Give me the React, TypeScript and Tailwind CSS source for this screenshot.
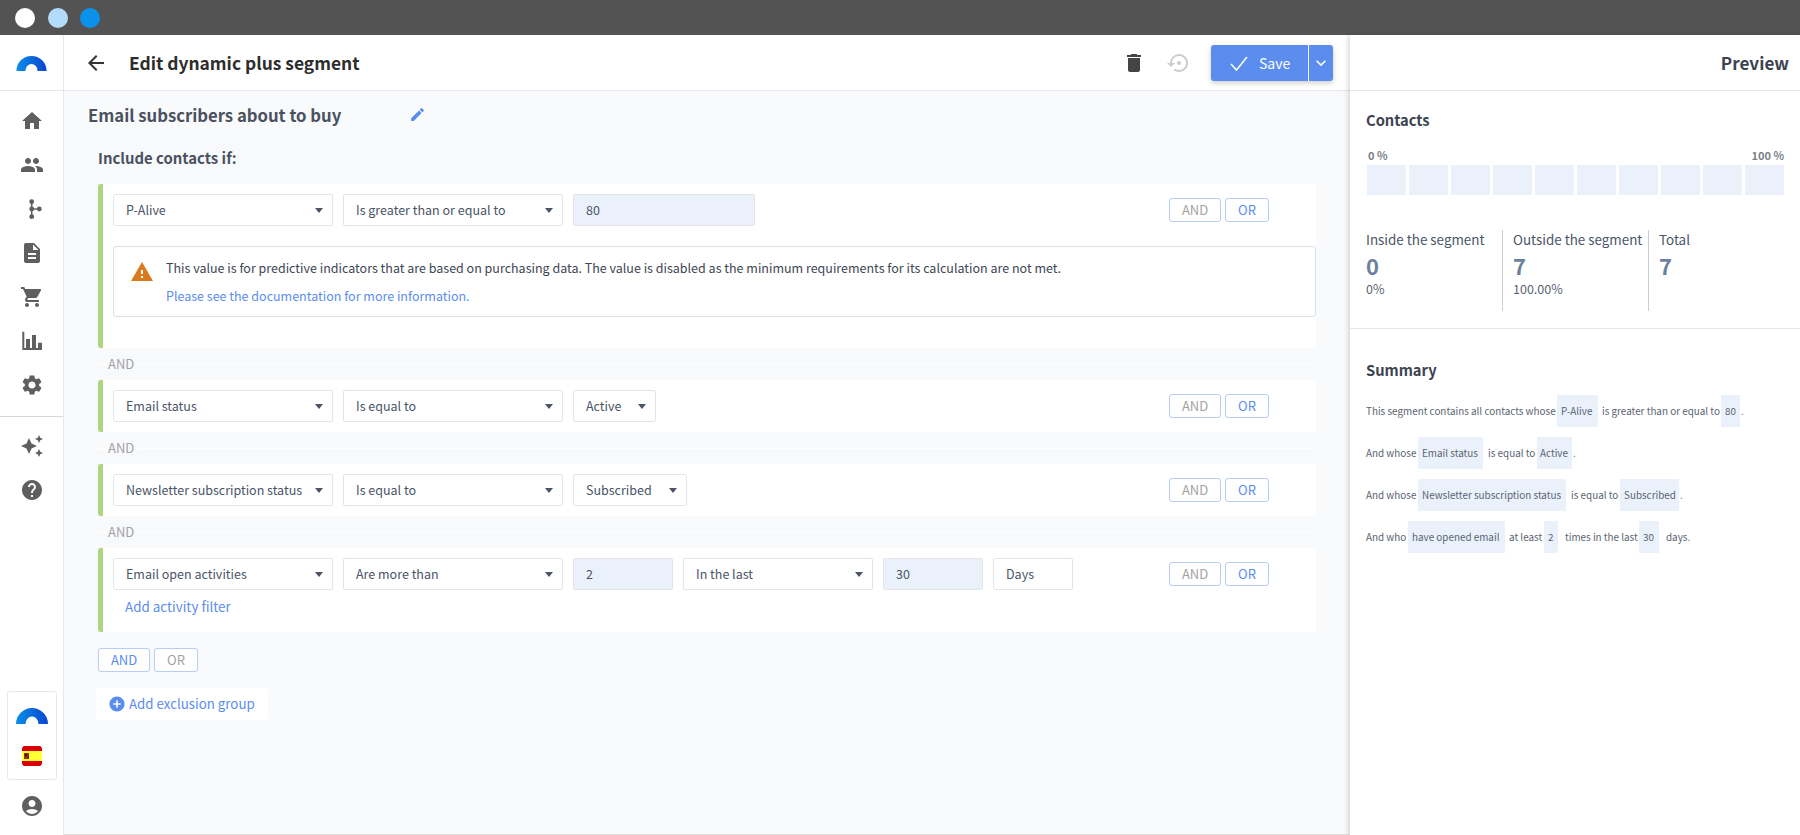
import { MdAccountCircle, MdAddCircle, MdArrowBack, MdAutoAwesome, MdDelete, MdDescription, MdEdit, MdHelp, MdHome, MdKeyboardArrowDown, MdPeople, MdSettings, MdSettingsBackupRestore, MdShoppingCart, MdWarning } from "react-icons/md"
import type { ReactNode } from "react"

function Logo({ id, className }: { id: string; className: string }) {
  return (
    <svg viewBox="0 0 32 17" className={className}>
      <defs>
        <linearGradient id={id} x1="0" y1="1" x2="1" y2="1">
          <stop offset="0" stopColor="#0a8fe8" />
          <stop offset="1" stopColor="#0a45d0" />
        </linearGradient>
      </defs>
      <path d="M0 17A16 16 0 0 1 32 17H22.500A6.500 7.500 0 0 0 9.500 17Z" fill={`url(#${id})`} />
    </svg>
  )
}

function BranchIcon() {
  return (
    <svg viewBox="0 0 24 24" className="w-6 h-6" fill="#5f5f5f">
      <circle cx="11.700" cy="4.700" r="2.400" />
      <circle cx="11.700" cy="12" r="2.400" />
      <circle cx="11.700" cy="19.700" r="2.400" />
      <circle cx="19.300" cy="12" r="2.400" />
      <path d="M10.900 4h1.600v16h-1.600z" />
      <path d="M12 11.300h7v1.400h-7z" />
    </svg>
  )
}

function BarsIcon() {
  return (
    <svg viewBox="0 0 24 24" className="w-6 h-6" fill="#5f5f5f">
      <path d="M2.300 2.700h2v16.300h17.700v2H2.300z" />
      <path d="M6 10h4v9H6zM12 6h4v13h-4zM18 13.700h4V19h-4z" />
    </svg>
  )
}

function SpainFlag() {
  return (
    <svg viewBox="0 0 20 20" className="w-5 h-5 rounded-[3px]">
      <rect width="20" height="20" fill="#d80000" />
      <rect y="5" width="20" height="10" fill="#ffff33" />
      <rect x="2" y="7" width="5" height="6" fill="#a52a00" />
      <rect x="3" y="8" width="2" height="2" fill="#222222" />
      <rect x="5" y="10" width="1.500" height="2" fill="#333333" />
    </svg>
  )
}

function NavItem({ children }: { children: ReactNode }) {
  return <div className="h-[44px] flex items-center justify-center text-[#5f5f5f]">{children}</div>
}

function Sidebar() {
  return (
    <aside className="w-[64px] shrink-0 bg-white border-r border-[#e5e7eb] flex flex-col">
      <div className="h-[56px] shrink-0 border-b border-[#e5e7eb] flex items-center justify-center">
        <Logo id="logoTop" className="w-[31px] h-[16px]" />
      </div>
      <div className="pt-[8px] flex flex-col">
        <NavItem><MdHome size={24} /></NavItem>
        <NavItem><MdPeople size={24} /></NavItem>
        <NavItem><BranchIcon /></NavItem>
        <NavItem><MdDescription size={24} /></NavItem>
        <NavItem><MdShoppingCart size={24} /></NavItem>
        <NavItem><BarsIcon /></NavItem>
        <NavItem><MdSettings size={24} /></NavItem>
      </div>
      <div className="mt-[9px] mb-[7px] border-t border-[#d9d9d9]" />
      <NavItem><MdAutoAwesome size={24} /></NavItem>
      <NavItem><MdHelp size={24} /></NavItem>
      <div className="mt-auto flex flex-col items-center">
        <div className="w-[50px] h-[89px] border border-[#e8e8e8] rounded-[3px] flex flex-col items-center pt-[15px]">
          <Logo id="logoBottom" className="w-[32px] h-[17px]" />
          <div className="mt-[22px]"><SpainFlag /></div>
        </div>
        <div className="mt-[14px] mb-[17px] text-[#5f5f5f]"><MdAccountCircle size={24} /></div>
      </div>
    </aside>
  )
}

function Caret() {
  return <span className="ml-auto w-0 h-0 border-x-[4.500px] border-x-transparent border-t-[5px] border-t-[#4b5563]" />
}

function Select({ w, children }: { w: string; children: ReactNode }) {
  return (
    <div className={`${w} h-[32px] shrink-0 bg-white border border-[#e3e5e8] rounded-[2px] pl-[12px] pr-[9px] flex items-center text-[12.500px] text-[#4a5568]`}>
      <span>{children}</span>
      <Caret />
    </div>
  )
}

function ValueBox({ w, children }: { w: string; children: ReactNode }) {
  return (
    <div className={`${w} h-[32px] shrink-0 bg-[#eaf1fb] border border-[#e3e5e8] rounded-[2px] px-[12px] flex items-center text-[12.500px] text-[#4a5568]`}>
      {children}
    </div>
  )
}

function AndOr({ active = "OR" }: { active?: "AND" | "OR" }) {
  return (
    <div className="flex gap-[4px] text-[13px]">
      <button className={`w-[52px] h-[24px] border border-[#b7cff5] rounded-[3px] bg-white ${active === "AND" ? "text-[#5b8def]" : "text-[#a3a3a3]"}`}>AND</button>
      <button className={`w-[44px] h-[24px] border border-[#b7cff5] rounded-[3px] bg-white ${active === "OR" ? "text-[#5b8def]" : "text-[#a3a3a3]"}`}>OR</button>
    </div>
  )
}

function Row({ children, below }: { children: ReactNode; below?: ReactNode }) {
  return (
    <div className="bg-white border-l-[5px] border-[#aed581] rounded-l-[3px] pl-[10px] py-[10px]">
      <div className="flex gap-[10px] pr-[47px]">
        {children}
        <div className="ml-auto pt-[4px]"><AndOr /></div>
      </div>
      {below}
    </div>
  )
}

function AndDivider() {
  return (
    <div className="h-[32px] flex items-center">
      <div className="w-[9px] h-px bg-white" />
      <span className="px-[1px] text-[13px] text-[#a3a3a3]">AND</span>
      <div className="flex-1 h-px bg-white ml-[3px]" />
    </div>
  )
}

function Editor() {
  return (
    <main className="flex-1 min-w-0 bg-[#f9fafb] border-b border-[#dddddd] flex flex-col">
      <header className="h-[56px] shrink-0 bg-white border-b border-[#e5e7eb] flex items-center pl-[20px] pr-[17px]">
        <MdArrowBack size={24} className="text-[#333333]" />
        <h1 className="ml-[21px] text-[17.400px] font-semibold text-[#2d2d2d]">Edit dynamic plus segment</h1>
        <MdDelete size={24} className="ml-auto text-[#444444]" />
        <MdSettingsBackupRestore size={24} className="ml-[21px] text-[#cccccc]" />
        <div className="ml-[20px] h-[36px] w-[122px] flex bg-[#5b8def] rounded-[3px] shadow-[0_2px_5px_rgba(0,0,0,0.2)] text-white">
          <div className="w-[98px] flex items-center border-r border-white pl-[18px]">
            <svg viewBox="0 0 20 20" className="w-[20px] h-[20px]" fill="none" stroke="#ffffff" strokeWidth="1.500">
              <path d="M2 11l5.500 6L18 4" />
            </svg>
            <span className="ml-[10px] text-[14px]">Save</span>
          </div>
          <div className="flex-1 flex items-center justify-center"><MdKeyboardArrowDown size={20} /></div>
        </div>
      </header>

      <div className="h-[47px] shrink-0 pl-[24px] flex items-center">
        <h2 className="w-[321px] text-[16.700px] font-bold text-[#4a5160]">Email subscribers about to buy</h2>
        <MdEdit size={17} className="text-[#5b8def]" />
      </div>

      <section className="ml-[25px] w-[1227px] h-[550px] bg-[#f8f9fb] pl-[9px] pt-[10px]">
        <h3 className="h-[20px] text-[14.900px] font-bold text-[#4a5160] leading-[20px]">Include contacts if:</h3>
        <div className="mt-[16px]">
          <Row
            below={
              <div className="mt-[20px] mb-[21px] h-[71px] bg-white border border-[#dcdfe3] rounded-[3px] flex pl-[16px] pt-[11px]">
                <MdWarning size={24} className="text-[#d97a1f] mt-[2px]" />
                <div className="ml-[12px] text-[12.500px]">
                  <p className="text-[#3d4654] leading-[20px]">This value is for predictive indicators that are based on purchasing data. The value is disabled as the minimum requirements for its calculation are not met.</p>
                  <p className="mt-[8px] text-[#5b8def] leading-[20px]">Please see the documentation for more information.</p>
                </div>
              </div>
            }
          >
            <Select w="w-[220px]">P-Alive</Select>
            <Select w="w-[220px]">Is greater than or equal to</Select>
            <ValueBox w="w-[182px]">80</ValueBox>
          </Row>
          <AndDivider />
          <Row>
            <Select w="w-[220px]">Email status</Select>
            <Select w="w-[220px]">Is equal to</Select>
            <Select w="w-[83px]">Active</Select>
          </Row>
          <AndDivider />
          <Row>
            <Select w="w-[220px]">Newsletter subscription status</Select>
            <Select w="w-[220px]">Is equal to</Select>
            <Select w="w-[114px]">Subscribed</Select>
          </Row>
          <AndDivider />
          <Row
            below={
              <p className="mt-[6px] mb-[6px] pl-[12px] text-[13.400px] text-[#5b8def] leading-[20px]">Add activity filter</p>
            }
          >
            <Select w="w-[220px]">Email open activities</Select>
            <Select w="w-[220px]">Are more than</Select>
            <ValueBox w="w-[100px]">2</ValueBox>
            <Select w="w-[190px]">In the last</Select>
            <ValueBox w="w-[100px]">30</ValueBox>
            <div className="w-[80px] h-[32px] shrink-0 bg-white border border-[#e3e5e8] rounded-[2px] px-[12px] flex items-center text-[12.500px] text-[#4a5568]">Days</div>
          </Row>
          <div className="mt-[16px]"><AndOr active="AND" /></div>
          <button className="mt-[16px] -ml-[2px] w-[172px] h-[32px] bg-white rounded-[3px] flex items-center pl-[12px] text-[13.300px] text-[#5b8def]">
            <MdAddCircle size={18} />
            <span className="ml-[3px]">Add exclusion group</span>
          </button>
        </div>
      </section>
    </main>
  )
}

function Chip({ className = "", children }: { className?: string; children: ReactNode }) {
  return <span className={`h-[32px] bg-[#eaf1fb] rounded-[1px] flex items-center ${className}`}>{children}</span>
}

function SummaryLine({ children }: { children: ReactNode }) {
  return <div className="h-[32px] mb-[10px] flex items-center text-[9.900px] text-[#5a6472]">{children}</div>
}

function Stat({ label, value, sub, className }: { label: string; value: string; sub?: string; className: string }) {
  return (
    <div className={`h-[81px] ${className}`}>
      <p className="text-[13.400px] leading-[18px] text-[#4a5568]">{label}</p>
      <p className="mt-[4px] text-[22px] leading-[26px] font-semibold text-[#6b7f9e]">{value}</p>
      {sub && <p className="mt-[2px] text-[12.500px] leading-[18px] text-[#5a6472]">{sub}</p>}
    </div>
  )
}

function Preview() {
  return (
    <aside className="w-[450px] shrink-0 bg-white shadow-[-2px_0_5px_rgba(0,0,0,0.15)] z-10 flex flex-col">
      <div className="h-[56px] shrink-0 border-b border-[#e5e7eb] flex items-center justify-end pr-[11px] text-[17.100px] font-semibold text-[#3c4350]">Preview</div>
      <div className="h-[238px] shrink-0 border-b border-[#e5e7eb] pl-[16px] pr-[16px]">
        <h3 className="mt-[19px] text-[14.700px] leading-[20px] font-bold text-[#3c4350]">Contacts</h3>
        <div className="mt-[18px] pl-[2px] flex justify-between text-[11px] leading-[14px] font-bold text-[#7b8088]">
          <span>0 %</span>
          <span>100 %</span>
        </div>
        <div className="mt-[3px] ml-[1px] flex gap-[3px]">
          {Array.from({ length: 10 }).map((_, i) => (
            <div key={i} className="w-[39px] h-[30px] bg-[#eaf1fb]" />
          ))}
        </div>
        <div className="mt-[35px] flex">
          <Stat label="Inside the segment" value="0" sub="0%" className="w-[137px] border-r border-[#c9ced6]" />
          <Stat label="Outside the segment" value="7" sub="100.00%" className="w-[146px] pl-[10px] border-r border-[#c9ced6]" />
          <Stat label="Total" value="7" className="pl-[10px]" />
        </div>
      </div>
      <div className="pl-[16px]">
        <h3 className="mt-[31px] mb-[15px] text-[14.700px] leading-[20px] font-bold text-[#3c4350]">Summary</h3>
        <SummaryLine>
          <span className="w-[189px]">This segment contains all contacts whose</span>
          <Chip className="ml-[2px] w-[41px] pl-[4px]">P-Alive</Chip>
          <span className="ml-[4px] w-[117px]">is greater than or equal to</span>
          <Chip className="ml-[2px] w-[19px] pl-[4px]">80</Chip>
          <span className="ml-[1px]">.</span>
        </SummaryLine>
        <SummaryLine>
          <span className="w-[50px]">And whose</span>
          <Chip className="ml-[2px] w-[65px] pl-[4px]">Email status</Chip>
          <span className="ml-[5px] w-[49px]">is equal to</span>
          <Chip className="w-[35px] pl-[3px]">Active</Chip>
          <span className="ml-[1px]">.</span>
        </SummaryLine>
        <SummaryLine>
          <span className="w-[50px]">And whose</span>
          <Chip className="ml-[2px] w-[148px] pl-[4px]">Newsletter subscription status</Chip>
          <span className="ml-[5px] w-[49px]">is equal to</span>
          <Chip className="w-[59px] pl-[4px]">Subscribed</Chip>
          <span className="ml-[1px]">.</span>
        </SummaryLine>
        <SummaryLine>
          <span className="w-[40px]">And who</span>
          <Chip className="ml-[2px] w-[97px] pl-[4px]">have opened email</Chip>
          <span className="ml-[4px] w-[35px]">at least</span>
          <Chip className="w-[14px] pl-[4px]">2</Chip>
          <span className="ml-[7px] w-[74px]">times in the last</span>
          <Chip className="w-[20px] pl-[4px]">30</Chip>
          <span className="ml-[7px]">days.</span>
        </SummaryLine>
      </div>
    </aside>
  )
}

export default function App() {
  return (
    <div className="w-[1800px] h-[835px] flex flex-col overflow-hidden bg-white whitespace-nowrap leading-[20px] font-['Noto_Sans_CJK_SC','Liberation_Sans',sans-serif]">
      <div className="h-[35px] shrink-0 bg-[#535353] flex items-center pl-[15px] gap-[12.700px]">
        <span className="w-[20px] h-[20px] rounded-full bg-white" />
        <span className="w-[20px] h-[20px] rounded-full bg-[#b3dcfa]" />
        <span className="w-[20px] h-[20px] rounded-full bg-[#0a91ea]" />
      </div>
      <div className="flex-1 min-h-0 flex">
        <Sidebar />
        <Editor />
        <Preview />
      </div>
    </div>
  )
}
